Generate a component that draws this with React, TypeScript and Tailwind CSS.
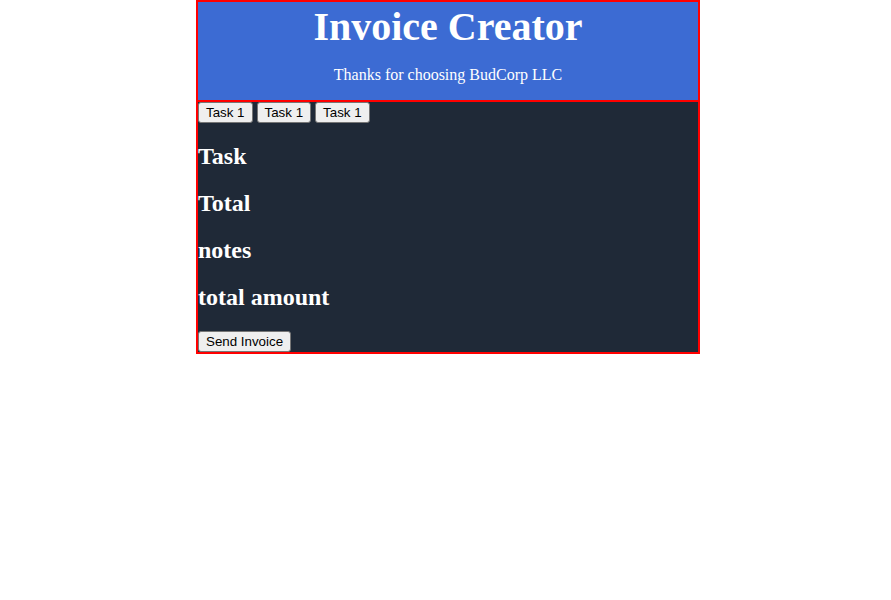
const buttonCls =
  "h-[21px] px-[7px] bg-[#efefef] border border-[#767676] rounded-[3px] text-[13.333px] leading-none text-black font-['Liberation_Sans',Arial,sans-serif]";

export default function App() {
  const tasks = ["Task 1", "Task 1", "Task 1"];

  return (
    <div className="min-h-[600px] w-full bg-white font-['Liberation_Serif','Times_New_Roman',serif]">
      <div className="ml-[196px] w-[504px] border-2 border-[#ff0000]">
        {/* Header */}
        <header className="bg-[#3c6bd3] text-white text-center border-b-2 border-[#ff0000] pt-[2px]">
          <h1 className="m-0 text-[40px] font-bold leading-[46px]">Invoice Creator</h1>
          <p className="my-4 text-[16px] leading-[18px]">Thanks for choosing BudCorp LLC</p>
        </header>

        {/* Body */}
        <main className="bg-[#1f2937] text-white">
          <div className="flex gap-1">
            {tasks.map((t, i) => (
              <button key={i} className={buttonCls}>
                {t}
              </button>
            ))}
          </div>
          <h2 className="mt-5 mb-5 text-[24px] font-bold leading-[27px]">Task</h2>
          <h2 className="mb-5 text-[24px] font-bold leading-[27px]">Total</h2>
          <h2 className="mb-5 text-[24px] font-bold leading-[27px]">notes</h2>
          <h2 className="mb-5 text-[24px] font-bold leading-[27px]">total amount</h2>
          <div className="flex">
            <button className={buttonCls}>Send Invoice</button>
          </div>
        </main>
      </div>
    </div>
  );
}
